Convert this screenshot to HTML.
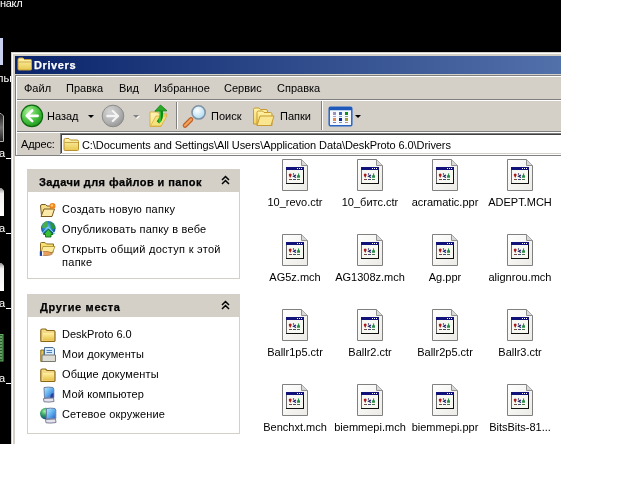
<!DOCTYPE html>
<html><head><meta charset="utf-8">
<style>
html,body{margin:0;padding:0;width:618px;height:499px;overflow:hidden;background:#fff;position:relative;font-family:"Liberation Sans",sans-serif;font-size:11px;color:#000}
.a{position:absolute}
.t{position:absolute;white-space:nowrap;line-height:13px;font-size:11px;will-change:transform}
.b{font-weight:bold;-webkit-text-stroke:0.25px currentColor}
svg{position:absolute;overflow:visible}
.lbl{width:80px;text-align:center}

</style></head><body>
<svg width="0" height="0" style="position:absolute;left:0;top:0">
<defs>
<linearGradient id="pg" x1="0" y1="0" x2="1" y2="1"><stop offset="0" stop-color="#ffffff"/><stop offset="1" stop-color="#ecebe6"/></linearGradient>
<symbol id="doc" viewBox="0 0 27 33">
<path d="M0.5,0.5 H19.5 L25.5,6.5 V31.5 H0.5 Z" fill="url(#pg)" stroke="#808080"/>
<path d="M19.5,0.5 V6.5 H25.5" fill="#d8d8d8" stroke="#909090"/>
<rect x="4" y="8" width="18" height="17" fill="#f8f8f2"/>
<rect x="4" y="8" width="1" height="17" fill="#6a6a6a"/>
<rect x="21" y="8" width="1" height="17" fill="#101010"/>
<rect x="4" y="24" width="18" height="1" fill="#101010"/>
<rect x="4" y="8" width="18" height="3" fill="#10127a"/>
<rect x="15" y="9" width="1" height="1" fill="#fff"/><rect x="17" y="9" width="1" height="1" fill="#fff"/><rect x="19" y="9" width="1" height="1" fill="#fff"/>
<path d="M6.7,15.9 A1.5,1.5 0 1,1 9.7,15.9 L8.2,18.9 Z" fill="#a81818"/>
<circle cx="11.5" cy="15" r="0.7" fill="#181868"/>
<path d="M14,16 L11.6,17.3 L14,18.5" fill="none" stroke="#181868" stroke-width="1.2"/>
<path d="M15,18.8 H18 V17.2 A1.5,1.5 0 0,0 15,17.2 Z" fill="#208a40"/>
<rect x="16.1" y="14.4" width="1" height="2" fill="#208a40"/>
<rect x="7" y="20" width="3" height="1" fill="#704848"/><rect x="11" y="20" width="3" height="1" fill="#484878"/><rect x="15" y="20" width="3" height="1" fill="#487050"/>
</symbol>
</defs></svg>
<!-- desktop -->
<div class="a" style="left:0;top:0;width:561px;height:444px;background:#000"></div>
<div class="t m" style="left:0;top:-3px;color:#fff;letter-spacing:-0.3px">накл</div>
<div class="a" style="left:0;top:38px;width:3px;height:27px;background:#c8d0f0"></div>
<div class="t m" style="left:-3px;top:72px;color:#fff">льв</div>

<!-- window frame -->
<div class="a" style="left:11px;top:52px;width:550px;height:392px;background:#d4d0c8"></div>
<div class="a" style="left:11px;top:52px;width:550px;height:1px;background:#d4d0c8"></div>
<div class="a" style="left:12px;top:53px;width:549px;height:1px;background:#fff"></div>
<div class="a" style="left:12px;top:53px;width:1px;height:391px;background:#fff"></div>
<!-- title bar -->
<div class="a" style="left:15px;top:56px;width:546px;height:18px;background:linear-gradient(to right,#0a246a,#5270aa)"></div>
<div class="t b m" style="left:34px;top:59px;color:#fff;letter-spacing:0.6px">Drivers</div>

<!-- rebar -->
<div class="a" style="left:15px;top:75px;width:546px;height:1px;background:#808080"></div>
<div class="a" style="left:15px;top:76px;width:546px;height:1px;background:#fff"></div>
<div class="a" style="left:15px;top:99px;width:546px;height:1px;background:#808080"></div>
<div class="a" style="left:15px;top:100px;width:546px;height:1px;background:#fff"></div>
<div class="a" style="left:15px;top:131px;width:546px;height:1px;background:#808080"></div>
<div class="a" style="left:15px;top:132px;width:546px;height:1px;background:#fff"></div>
<div class="a" style="left:15px;top:155px;width:546px;height:1px;background:#808080"></div>
<div class="a" style="left:15px;top:75px;width:1px;height:81px;background:#808080"></div>
<div class="a" style="left:16px;top:76px;width:1px;height:79px;background:#fff"></div>

<!-- menu -->
<div class="t m" style="left:24px;top:82px">Файл</div>
<div class="t m" style="left:66px;top:82px">Правка</div>
<div class="t m" style="left:119px;top:82px">Вид</div>
<div class="t m" style="left:154px;top:82px">Избранное</div>
<div class="t m" style="left:224px;top:82px">Сервис</div>
<div class="t m" style="left:277px;top:82px">Справка</div>

<!-- toolbar -->
<div class="t m" style="left:47px;top:110px">Назад</div>
<div class="t m" style="left:211px;top:110px">Поиск</div>
<div class="t m" style="left:280px;top:110px">Папки</div>
<div class="a" style="left:176px;top:102px;width:1px;height:27px;background:#808080"></div>
<div class="a" style="left:177px;top:102px;width:1px;height:27px;background:#fff"></div>
<div class="a" style="left:321px;top:101px;width:1px;height:29px;background:#808080"></div>
<div class="a" style="left:322px;top:101px;width:1px;height:29px;background:#fff"></div>

<!-- address -->
<div class="t m" style="left:21px;top:138px;letter-spacing:-0.15px">Адрес:</div>
<div class="a" style="left:60px;top:133px;width:501px;height:22px;background:#fff"></div>
<div class="a" style="left:60px;top:133px;width:501px;height:1px;background:#808080"></div>
<div class="a" style="left:60px;top:133px;width:1px;height:21px;background:#808080"></div>
<div class="a" style="left:61px;top:134px;width:500px;height:1px;background:#404040"></div>
<div class="a" style="left:61px;top:134px;width:1px;height:19px;background:#404040"></div>
<div class="a" style="left:61px;top:153px;width:500px;height:1px;background:#d4d0c8"></div>
<div class="t m" style="left:82px;top:139px;letter-spacing:-0.08px">C:\Documents and Settings\All Users\Application Data\DeskProto 6.0\Drivers</div>

<!-- body -->
<div class="a" style="left:15px;top:156px;width:546px;height:288px;background:#fff"></div>

<!-- task box 1 -->
<div class="a" style="left:27px;top:169px;width:213px;height:23px;background:#d4d0c8"></div>
<div class="a" style="left:27px;top:192px;width:211px;height:86px;border:1px solid #d4d0c8;border-top:0"></div>
<div class="t b m" style="left:39px;top:176px;letter-spacing:0.4px">Задачи для файлов и папок</div>
<div class="t m" style="left:62px;top:203px;letter-spacing:0.28px">Создать новую папку</div>
<div class="t m" style="left:62px;top:223px;letter-spacing:0.2px">Опубликовать папку в вебе</div>
<div class="t m" style="left:62px;top:243px;letter-spacing:0.28px">Открыть общий доступ к этой</div>
<div class="t m" style="left:62px;top:256px;letter-spacing:0.28px">папке</div>

<!-- task box 2 -->
<div class="a" style="left:27px;top:294px;width:213px;height:23px;background:#d4d0c8"></div>
<div class="a" style="left:27px;top:317px;width:211px;height:116px;border:1px solid #d4d0c8;border-top:0"></div>
<div class="t b m" style="left:40px;top:301px;letter-spacing:0.65px">Другие места</div>
<div class="t m" style="left:62px;top:328px">DeskProto 6.0</div>
<div class="t m" style="left:62px;top:348px;letter-spacing:0.15px">Мои документы</div>
<div class="t m" style="left:62px;top:368px;letter-spacing:0.13px">Общие документы</div>
<div class="t m" style="left:62px;top:388px;letter-spacing:0.15px">Мой компьютер</div>
<div class="t m" style="left:62px;top:408px;letter-spacing:0.18px">Сетевое окружение</div>

<!-- title folder icon -->
<svg style="left:17px;top:57px" width="16" height="14" viewBox="0 0 16 14">
<defs><linearGradient id="fy" x1="0" y1="0" x2="0" y2="1"><stop offset="0" stop-color="#fff6b0"/><stop offset="1" stop-color="#e8c850"/></linearGradient></defs>
<path d="M1,2.5 Q1,1 2.5,1 H6 L7.5,2.5 H13.5 Q14.5,2.5 14.5,3.5 V12 Q14.5,13 13.5,13 H2 Q1,13 1,12 Z" fill="url(#fy)" stroke="#c8a040" stroke-width="1"/>
<path d="M1.5,5 H14" stroke="#d0b050" stroke-width="1"/>
</svg>

<!-- back button -->
<svg style="left:20px;top:104px" width="24" height="24" viewBox="0 0 24 24">
<defs><radialGradient id="gb" cx="0.35" cy="0.3" r="0.8"><stop offset="0" stop-color="#a8f098"/><stop offset="0.55" stop-color="#48c040"/><stop offset="1" stop-color="#189018"/></radialGradient></defs>
<circle cx="11.9" cy="11.9" r="10.7" fill="url(#gb)" stroke="#0e6a0e" stroke-width="1.2"/>
<path d="M12.2,6.5 L6.8,11.8 L12.2,17.2" fill="none" stroke="#fff" stroke-width="2.6" stroke-linecap="round" stroke-linejoin="round"/>
<path d="M7.2,11.8 H17.6" stroke="#fff" stroke-width="2.8" stroke-linecap="round"/>
</svg>
<div class="a" style="left:88px;top:115px;width:0;height:0;border-left:3px solid transparent;border-right:3px solid transparent;border-top:3px solid #000"></div>

<!-- forward button -->
<svg style="left:101px;top:104px" width="24" height="24" viewBox="0 0 24 24">
<defs><radialGradient id="gg" cx="0.35" cy="0.3" r="0.8"><stop offset="0" stop-color="#d4d4d4"/><stop offset="0.6" stop-color="#b2b2b2"/><stop offset="1" stop-color="#909090"/></radialGradient></defs>
<circle cx="12" cy="12" r="10.8" fill="url(#gg)" stroke="#8a8a8a" stroke-width="1"/>
<path d="M11.8,7 L17,12 L11.8,17" fill="none" stroke="#f4f4f4" stroke-width="2.3" stroke-linecap="round" stroke-linejoin="round"/>
<path d="M6.4,12 H16.4" stroke="#f4f4f4" stroke-width="2.4" stroke-linecap="round"/>
</svg>
<div class="a" style="left:134px;top:116px;width:0;height:0;border-left:3px solid transparent;border-right:3px solid transparent;border-top:3px solid #fff"></div><div class="a" style="left:133px;top:115px;width:0;height:0;border-left:3px solid transparent;border-right:3px solid transparent;border-top:3px solid #808080"></div>

<!-- up folder -->
<svg style="left:148px;top:103px" width="22" height="26" viewBox="0 0 22 26">
<defs><linearGradient id="fu" x1="0" y1="0" x2="1" y2="1"><stop offset="0" stop-color="#fff8c0"/><stop offset="1" stop-color="#f0d060"/></linearGradient>
<linearGradient id="ga" x1="0" y1="0" x2="1" y2="0"><stop offset="0" stop-color="#108a10"/><stop offset="0.6" stop-color="#40d040"/><stop offset="1" stop-color="#108a10"/></linearGradient></defs>
<path d="M2,9 L9,9 L12,11 L19,11 L13,23.5 L2,23.5 Z" fill="url(#fu)" stroke="#d8b048" stroke-width="1"/>
<path d="M2.5,23 L8,13 L19,13 L13,23 Z" fill="#f6e27a" stroke="#d8b048" stroke-width="0.8"/>
<path d="M10,19.5 Q14.5,15 13,7.5" fill="none" stroke="url(#ga)" stroke-width="3.6"/>
<path d="M6.8,8.2 L12.5,2 L19,7.8 Z" fill="#2aa82a" stroke="#108010" stroke-width="0.8"/>
</svg>

<!-- separators -->

<!-- search -->
<svg style="left:182px;top:103px" width="26" height="26" viewBox="0 0 26 26">
<defs><radialGradient id="lens" cx="0.4" cy="0.35" r="0.7"><stop offset="0" stop-color="#ffffff"/><stop offset="1" stop-color="#a8d8f0"/></radialGradient></defs>
<path d="M3,22.5 L9,16.5" stroke="#c06020" stroke-width="4.6" stroke-linecap="round"/>
<path d="M3,22.5 L9,16.5" stroke="#f0a060" stroke-width="2.4" stroke-linecap="round"/>
<circle cx="16.6" cy="9.4" r="6.6" fill="url(#lens)" stroke="#7f93a3" stroke-width="1.6"/>
</svg>

<!-- folders -->
<svg style="left:252px;top:106px" width="24" height="22" viewBox="0 0 24 22">
<defs><linearGradient id="ff" x1="0" y1="0" x2="0" y2="1"><stop offset="0" stop-color="#fff4a8"/><stop offset="1" stop-color="#f0d060"/></linearGradient></defs>
<path d="M1.5,3.5 Q1.5,2 3,2 H7 L8.5,3.5 H14 Q15.5,3.5 15.5,5 V18 H1.5 Z" fill="url(#ff)" stroke="#c89a30" stroke-width="1"/>
<path d="M5,6.5 Q5,5 6.5,5 H10.5 L12,6.5 H18.5 Q20,6.5 20,8 V19.5 H5 Z" fill="url(#ff)" stroke="#c89a30" stroke-width="1"/>
<path d="M5,19.5 L8,10 H22 L19,19.5 Z" fill="#fae690" stroke="#c89a30" stroke-width="1"/>
</svg>

<!-- views -->
<svg style="left:328px;top:106px" width="25" height="21" viewBox="0 0 25 21">
<rect x="1.2" y="1.2" width="22.6" height="18.6" rx="1.2" fill="#f4faff" stroke="#2a64c4" stroke-width="1.5"/>
<rect x="1" y="1" width="23" height="3.2" rx="1" fill="#1e58b8"/>
<rect x="5" y="6" width="3" height="3" fill="#a090c0"/><rect x="11" y="6" width="3" height="3" fill="#3868b8"/><rect x="17" y="6" width="3" height="3" fill="#109020"/>
<rect x="5" y="10" width="3" height="1" fill="#b0a0c8"/><rect x="11" y="10" width="3" height="1" fill="#80a0c0"/><rect x="17" y="10" width="3" height="1" fill="#80a080"/>
<rect x="5" y="12" width="3" height="3" fill="#e88850"/><rect x="11" y="12" width="3" height="3" fill="#102a90"/><rect x="17" y="12" width="3" height="3" fill="#a8a030"/>
<rect x="5" y="16" width="3" height="1" fill="#8080a0"/><rect x="11" y="16" width="3" height="1" fill="#8090b0"/><rect x="17" y="16" width="3" height="1" fill="#c09080"/>
</svg>
<div class="a" style="left:355px;top:115px;width:0;height:0;border-left:3px solid transparent;border-right:3px solid transparent;border-top:3px solid #000"></div>

<!-- address folder -->
<svg style="left:63px;top:137px" width="17" height="15" viewBox="0 0 17 15">
<path d="M1,3 Q1,1.5 2.5,1.5 H6 L7.5,3 H14 Q15.5,3 15.5,4.5 V12.5 Q15.5,13.5 14.5,13.5 H2 Q1,13.5 1,12.5 Z" fill="url(#fy)" stroke="#b89030" stroke-width="1"/>
<path d="M1.5,5.5 H15" stroke="#c8a848" stroke-width="1"/>
</svg>

<!-- chevrons -->
<svg style="left:221px;top:175px" width="10" height="10" viewBox="0 0 10 10">
<path d="M1,5 L4.5,1.5 L8,5 M1,9 L4.5,5.5 L8,9" fill="none" stroke="#000" stroke-width="1.5"/>
</svg>
<svg style="left:221px;top:300px" width="10" height="10" viewBox="0 0 10 10">
<path d="M1,5 L4.5,1.5 L8,5 M1,9 L4.5,5.5 L8,9" fill="none" stroke="#000" stroke-width="1.5"/>
</svg>

<!-- task icons -->
<svg style="left:39px;top:202px" width="18" height="16" viewBox="0 0 18 16">
<path d="M1.5,4 Q1.5,2.5 3,2.5 H6.5 L8,4 H12 V13.5 H2.5 Z" fill="#f4dc88" stroke="#7a5a20" stroke-width="1"/>
<path d="M2,14.5 L5,7 H15.5 L13,14.5 Z" fill="#fbeaa8" stroke="#7a5a20" stroke-width="1"/>
<circle cx="13.5" cy="4" r="3" fill="#f08020"/>
<circle cx="13" cy="3.5" r="1.3" fill="#ffd060"/>
</svg>
<svg style="left:40px;top:220px" width="17" height="18" viewBox="0 0 17 18">
<defs><radialGradient id="glb" cx="0.45" cy="0.4" r="0.65"><stop offset="0" stop-color="#60c0f0"/><stop offset="0.6" stop-color="#2070c0"/><stop offset="1" stop-color="#10408a"/></radialGradient></defs>
<circle cx="8.3" cy="8.3" r="7.3" fill="url(#glb)"/>
<path d="M2.5,5 Q4,1.5 8,1.2 Q7,4 8,6.5 Q5,8 2,8 Z" fill="#48b048"/>
<path d="M10,2 Q14.5,3.5 15.2,8 Q13,10 11,8 Q10.5,5 10,2 Z" fill="#2a9a30"/>
<path d="M1.5,14 L8.3,7 L15,14" fill="none" stroke="#8ae0f0" stroke-width="1"/>
<path d="M3.5,14.5 L8.3,9.2 L13,14.5 L11,14.5 V17 H5.5 V14.5 Z" fill="#38c038" stroke="#0a5a10" stroke-width="0.8"/>
</svg>
<svg style="left:39px;top:241px" width="18" height="16" viewBox="0 0 18 16">
<path d="M1.5,2.5 Q1.5,1.5 2.5,1.5 H6 L7.5,3 H14.5 L14,11.5 H1.5 Z" fill="#f8e070" stroke="#8a6a20" stroke-width="1"/>
<path d="M2,11.5 L4,5.5 H16 L13.5,11.5 Z" fill="#fcec9c" stroke="#a88a30" stroke-width="0.8"/>
<path d="M3,10.5 H6.5 Q9.5,10.2 11.5,11.5 L13.5,12.8 Q11.5,14.5 8,14.5 H3 Z" fill="#e8a060" stroke="#9a5a20" stroke-width="0.6"/>
<rect x="3" y="10.3" width="1.2" height="4.4" fill="#ffffff"/>
<rect x="0.8" y="10.3" width="2.2" height="4.6" fill="#2040a0"/>
</svg>

<svg style="left:40px;top:328px" width="17" height="15" viewBox="0 0 17 15">
<defs><linearGradient id="fo" x1="0" y1="0" x2="0" y2="1"><stop offset="0" stop-color="#fff0a0"/><stop offset="1" stop-color="#e8c048"/></linearGradient></defs>
<path d="M0.8,2.5 Q0.8,1 2.3,1 H5.5 L7,2.5 H13.5 Q15,2.5 15,4 V12.5 Q15,13.5 14,13.5 H1.8 Q0.8,13.5 0.8,12.5 Z" fill="#f2d888" stroke="#8a6818" stroke-width="1.2"/>
<rect x="3" y="5" width="11" height="7.5" fill="url(#fo)"/>
</svg>
<svg style="left:40px;top:346px" width="17" height="17" viewBox="0 0 17 17">
<path d="M0.8,4 H4 V15.5 H0.8 Z" fill="#e8c850" stroke="#8a6818" stroke-width="1"/>
<path d="M4.5,1.5 H13 L14.5,3 V10 H4.5 Z" fill="#d8ecff" stroke="#4a6a98" stroke-width="1"/>
<path d="M6.5,4.5 H12 M6.5,6.5 H12" stroke="#5080c0" stroke-width="1"/>
<path d="M2,9 H15.5 V15.5 H2 Z" fill="#dcdcd4" stroke="#7a7a70" stroke-width="1"/>
</svg>
<svg style="left:40px;top:368px" width="17" height="15" viewBox="0 0 17 15">
<path d="M0.8,2.5 Q0.8,1 2.3,1 H5.5 L7,2.5 H13.5 Q15,2.5 15,4 V12.5 Q15,13.5 14,13.5 H1.8 Q0.8,13.5 0.8,12.5 Z" fill="#f2d888" stroke="#8a6818" stroke-width="1.2"/>
<rect x="3" y="5" width="11" height="7.5" fill="url(#fo)"/>
</svg>
<svg style="left:42px;top:386px" width="14" height="17" viewBox="0 0 14 17">
<defs><linearGradient id="scr" x1="0" y1="0" x2="1" y2="1"><stop offset="0" stop-color="#c0ecff"/><stop offset="0.5" stop-color="#60b0f0"/><stop offset="1" stop-color="#2858b8"/></linearGradient></defs>
<path d="M2,1.5 Q6,0.8 11,1.5 L11.8,3 V11.5 L2.5,12 Z" fill="url(#scr)" stroke="#6a80a8" stroke-width="1"/>
<path d="M9,8 L11.5,7 V12 L8,12.5 Z" fill="#3040a0"/>
<path d="M1.5,12.5 L11.5,12 L12,15.5 Q7,16.5 2,15.8 Z" fill="#e4e4ee" stroke="#808098" stroke-width="1"/>
</svg>
<svg style="left:39px;top:406px" width="18" height="18" viewBox="0 0 18 18">
<defs><radialGradient id="gl2" cx="0.4" cy="0.3" r="0.7"><stop offset="0" stop-color="#a0f0a0"/><stop offset="0.5" stop-color="#30a060"/><stop offset="1" stop-color="#104890"/></radialGradient></defs>
<circle cx="6.8" cy="7.6" r="5.8" fill="url(#gl2)"/>
<path d="M7.5,2.5 Q11.5,1.8 16,2.5 L16.8,4 V12.5 L7.5,13 Z" fill="url(#scr)" stroke="#6a80a8" stroke-width="1"/>
<path d="M6.5,13.5 L16.5,13 L17,16.5 Q12,17.5 7,16.8 Z" fill="#e4e4ee" stroke="#808098" stroke-width="1"/>
</svg>

<!-- desktop icons & text -->
<svg style="left:0;top:110px" width="6" height="34" viewBox="0 0 6 34">
<defs><linearGradient id="d2" x1="0" y1="0" x2="0" y2="1"><stop offset="0" stop-color="#202020"/><stop offset="0.5" stop-color="#707070"/><stop offset="1" stop-color="#202020"/></linearGradient></defs>
<path d="M-1,3.5 L1,3.5 L3.5,6 V31.5 H-1 Z" fill="url(#d2)" stroke="#b0b0b0" stroke-width="1"/>
</svg>
<svg style="left:0;top:185px" width="6" height="34" viewBox="0 0 6 34">
<defs><linearGradient id="d3" x1="0" y1="0" x2="0" y2="1"><stop offset="0" stop-color="#909090"/><stop offset="0.2" stop-color="#f0f0f0"/><stop offset="1" stop-color="#ffffff"/></linearGradient></defs>
<path d="M-1,3 L1.5,3 L4,5.5 V31 H-1 Z" fill="url(#d3)"/>
</svg>
<svg style="left:0;top:260px" width="6" height="34" viewBox="0 0 6 34">
<path d="M-1,3 L1.5,3 L4,5.5 V31 H-1 Z" fill="url(#d3)"/>
</svg>
<svg style="left:0;top:333px" width="6" height="30" viewBox="0 0 6 30">
<rect x="-1" y="1.5" width="4" height="26.5" fill="#2a5a2a" stroke="#60b060" stroke-width="1"/>
<path d="M0,4 H2 M0,7 H2 M0,10 H2 M0,13 H2 M0,16 H2 M0,19 H2 M0,22 H2 M0,25 H2" stroke="#a0e0a0" stroke-width="1.2"/>
</svg>
<div class="t" style="left:-1px;top:147px;color:#fff">a</div><div class="a" style="left:6px;top:158px;width:5px;height:1px;background:#fff"></div>
<div class="t" style="left:-1px;top:222px;color:#fff">a</div><div class="a" style="left:6px;top:233px;width:5px;height:1px;background:#fff"></div>
<div class="t" style="left:-1px;top:297px;color:#fff">a</div><div class="a" style="left:6px;top:308px;width:5px;height:1px;background:#fff"></div>
<div class="t" style="left:-1px;top:372px;color:#fff">a</div><div class="a" style="left:6px;top:383px;width:5px;height:1px;background:#fff"></div>
<!-- files -->
<svg class="fi" style="left:282px;top:159px" width="27" height="33"><use href="#doc"/></svg>
<div class="t m lbl" style="left:255px;top:196px">10_revo.ctr</div>
<svg class="fi" style="left:357px;top:159px" width="27" height="33"><use href="#doc"/></svg>
<div class="t m lbl" style="left:330px;top:196px">10_битс.ctr</div>
<svg class="fi" style="left:432px;top:159px" width="27" height="33"><use href="#doc"/></svg>
<div class="t m lbl" style="left:405px;top:196px">acramatic.ppr</div>
<svg class="fi" style="left:507px;top:159px" width="27" height="33"><use href="#doc"/></svg>
<div class="t m lbl" style="left:480px;top:196px">ADEPT.MCH</div>
<svg class="fi" style="left:282px;top:234px" width="27" height="33"><use href="#doc"/></svg>
<div class="t m lbl" style="left:255px;top:271px">AG5z.mch</div>
<svg class="fi" style="left:357px;top:234px" width="27" height="33"><use href="#doc"/></svg>
<div class="t m lbl" style="left:330px;top:271px">AG1308z.mch</div>
<svg class="fi" style="left:432px;top:234px" width="27" height="33"><use href="#doc"/></svg>
<div class="t m lbl" style="left:405px;top:271px">Ag.ppr</div>
<svg class="fi" style="left:507px;top:234px" width="27" height="33"><use href="#doc"/></svg>
<div class="t m lbl" style="left:480px;top:271px">alignrou.mch</div>
<svg class="fi" style="left:282px;top:309px" width="27" height="33"><use href="#doc"/></svg>
<div class="t m lbl" style="left:255px;top:346px">Ballr1p5.ctr</div>
<svg class="fi" style="left:357px;top:309px" width="27" height="33"><use href="#doc"/></svg>
<div class="t m lbl" style="left:330px;top:346px">Ballr2.ctr</div>
<svg class="fi" style="left:432px;top:309px" width="27" height="33"><use href="#doc"/></svg>
<div class="t m lbl" style="left:405px;top:346px">Ballr2p5.ctr</div>
<svg class="fi" style="left:507px;top:309px" width="27" height="33"><use href="#doc"/></svg>
<div class="t m lbl" style="left:480px;top:346px">Ballr3.ctr</div>
<svg class="fi" style="left:282px;top:384px" width="27" height="33"><use href="#doc"/></svg>
<div class="t m lbl" style="left:255px;top:421px">Benchxt.mch</div>
<svg class="fi" style="left:357px;top:384px" width="27" height="33"><use href="#doc"/></svg>
<div class="t m lbl" style="left:330px;top:421px">biemmepi.mch</div>
<svg class="fi" style="left:432px;top:384px" width="27" height="33"><use href="#doc"/></svg>
<div class="t m lbl" style="left:405px;top:421px">biemmepi.ppr</div>
<svg class="fi" style="left:507px;top:384px" width="27" height="33"><use href="#doc"/></svg>
<div class="t m lbl" style="left:480px;top:421px">BitsBits-81...</div>
</body></html>
